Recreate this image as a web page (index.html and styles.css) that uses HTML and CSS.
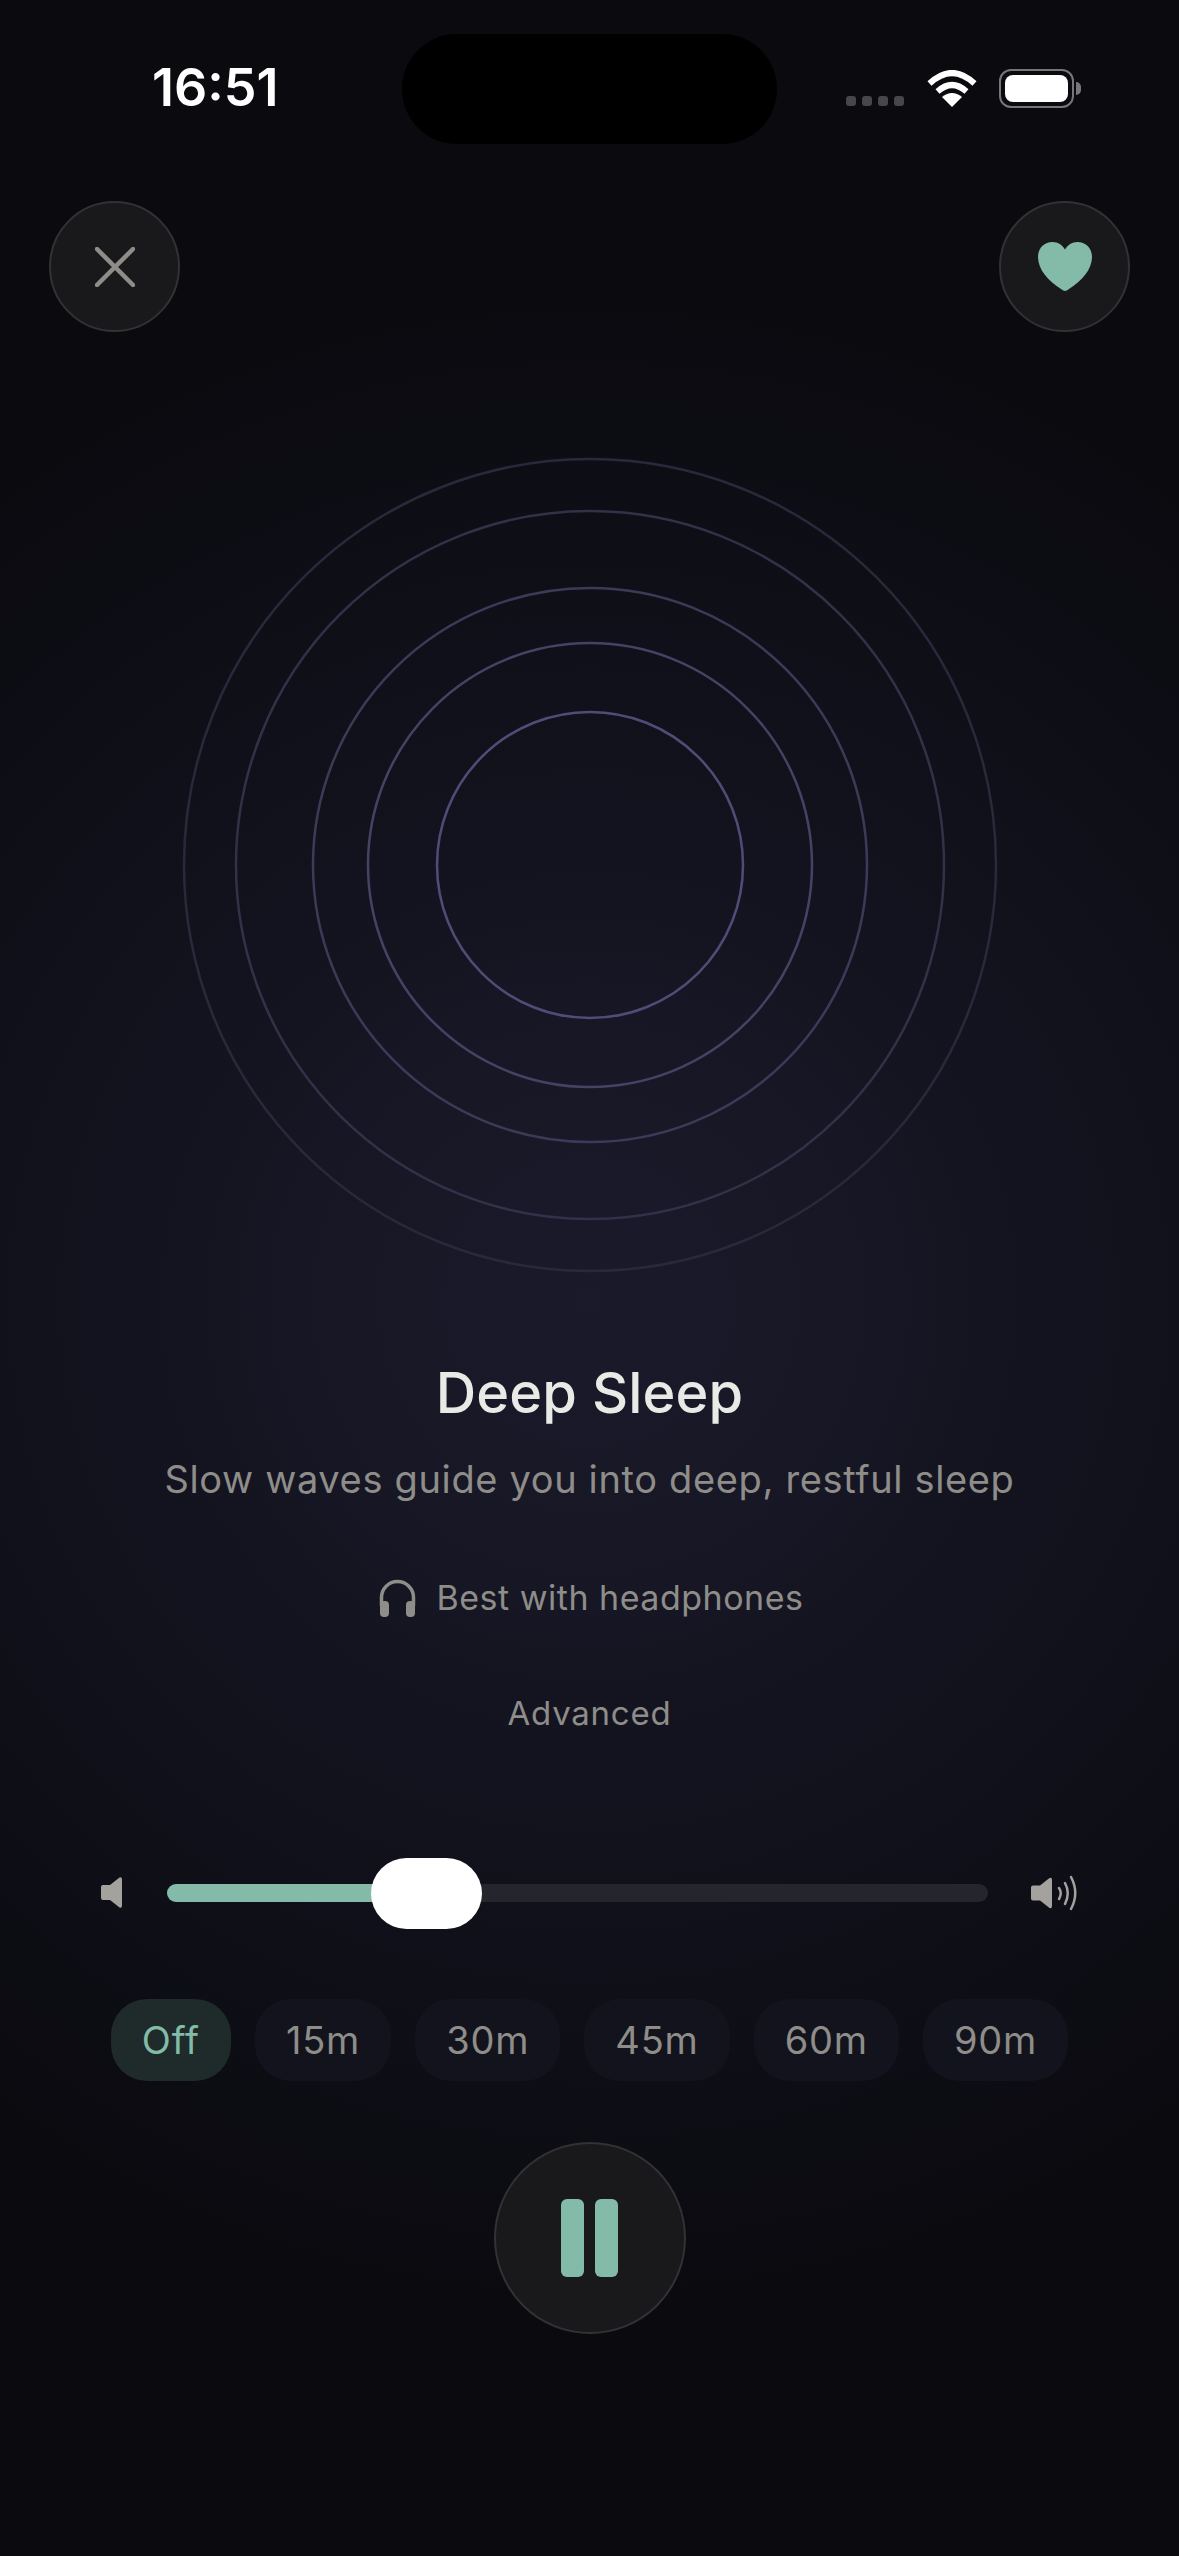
FILE: index.html
```html
<!doctype html>
<html lang="en">

<head>
  <title>Deep Sleep</title>
  <meta charset="utf-8">
  <meta name="viewport" content="width=device-width, initial-scale=1">
  <link rel="stylesheet" href="styles.css">
</head>

<body>
  <div class="screen">
    <div class="island"></div>

    <div class="status">
      <div class="time">16:51</div>
      <div class="status-icons">
        <div class="signal"><span></span><span></span><span></span><span></span></div>
        <svg class="wifi" width="50" height="37" viewBox="0 0 50 37">
          <path d="M2.5 13.5Q25 -7.5 47.5 13.5" fill="none" stroke="#fff" stroke-width="6" />
          <path d="M10.5 21.5Q25 8.5 39.5 21.5" fill="none" stroke="#fff" stroke-width="6" />
          <path d="M25 37L15 27Q25 19 35 27Z" fill="#fff" />
        </svg>
        <div class="battery"><div class="battery-fill"></div></div>
        <div class="battery-nub"></div>
      </div>
    </div>

    <div class="topbar">
      <div class="round-btn">
        <svg width="40" height="40" viewBox="0 0 40 40">
          <path d="M2 2L38 38M38 2L2 38" fill="none" stroke="#8e8d89" stroke-width="4.500" stroke-linecap="round" />
        </svg>
      </div>
      <div class="round-btn">
        <svg width="54" height="49" viewBox="0 0 54 49">
          <path d="M27 49C26 49 24.500 48 23 47C10 38.500 0 27.500 0 15C0 6 6.500 0 14.500 0C20 0 24.500 3 27 7.500C29.500 3 34 0 39.500 0C47.500 0 54 6 54 15C54 27.500 44 38.500 31 47C29.500 48 28 49 27 49Z" fill="#83bba8" />
        </svg>
      </div>
    </div>

    <svg class="rings" width="820" height="820" viewBox="0 0 820 820">
      <circle cx="410" cy="410" r="406" fill="none" stroke="#2a293c" stroke-width="2.500" />
      <circle cx="410" cy="410" r="354" fill="none" stroke="#333148" stroke-width="2.500" />
      <circle cx="410" cy="410" r="277" fill="none" stroke="#3c3a57" stroke-width="2.500" />
      <circle cx="410" cy="410" r="222" fill="none" stroke="#454264" stroke-width="2.500" />
      <circle cx="410" cy="410" r="153" fill="none" stroke="#504c77" stroke-width="2.500" />
    </svg>

    <div class="title">Deep Sleep</div>
    <div class="subtitle">Slow waves guide you into deep, restful sleep</div>

    <div class="hint">
      <svg width="37" height="38" viewBox="0 0 37 38">
        <path d="M2.500 27V18.500A16 16 0 0 1 34.500 18.500V27" fill="none" stroke="#8e8d89" stroke-width="3.500" />
        <rect x="1" y="22" width="9" height="16" rx="4" fill="#8e8d89" />
        <rect x="27" y="22" width="9" height="16" rx="4" fill="#8e8d89" />
      </svg>
      <span>Best with headphones</span>
    </div>

    <div class="advanced">Advanced</div>

    <div class="volume">
      <svg class="vol-low" width="21" height="31" viewBox="0 0 21 31">
        <path d="M18.500 .5Q21 -.5 21 2.500V28.500Q21 31.500 18.500 30.500L9 23H2Q0 23 0 21V10Q0 8 2 8H9Z" fill="#a3a29d" />
      </svg>
      <div class="track">
        <div class="track-fill"></div>
        <div class="thumb"></div>
      </div>
      <svg class="vol-high" width="48" height="36" viewBox="0 0 48 36">
        <path d="M18.500 3Q21 2 21 5V31Q21 34 18.500 33L9 25.500H2Q0 25.500 0 23.500V12.500Q0 10.500 2 10.500H9Z" fill="#a3a29d" />
        <path d="M28 13Q31.500 18 28 24M34 8Q39.500 18 34 29M40 2Q48.500 18 40 34" fill="none" stroke="#a3a29d" stroke-width="2.500" stroke-linecap="round" />
      </svg>
    </div>

    <div class="chips">
      <div class="chip active">Off</div>
      <div class="chip">15m</div>
      <div class="chip">30m</div>
      <div class="chip">45m</div>
      <div class="chip">60m</div>
      <div class="chip">90m</div>
    </div>

    <div class="pause-wrap">
      <div class="pause-btn">
        <span class="pause-bar"></span>
        <span class="pause-bar"></span>
      </div>
    </div>
  </div>
</body>

</html>
```

FILE: styles.css
```css
html {
  height: 100%;
}

body {
  margin: 0;
  padding: 0;
  background-color: #0a0a0f;
  font-family: 'Inter', 'Liberation Sans', sans-serif;
}

.screen {
  position: relative;
  width: 1179px;
  height: 2556px;
  overflow: hidden;
  background-color: #0a0a0f;
  background-image: radial-gradient(circle 1000px at 589px 1300px, #1b1a2b 0%, #161624 30%, #10101a 65%, #0a0a0f 100%);
}

/* Camera cutout sits over the status bar */
.island {
  position: absolute;
  left: 402px;
  top: 34px;
  width: 375px;
  height: 110px;
  border-radius: 55px;
  background-color: #000000;
}

.status {
  height: 176px;
  display: flex;
  align-items: center;
  justify-content: space-between;
  padding: 0 98px 0 152px;
  box-sizing: border-box;
}

.time {
  font-size: 52px;
  font-weight: 600;
  color: #ffffff;
  line-height: 60px;
}

.status-icons {
  display: flex;
  align-items: center;
}

.signal {
  display: flex;
  gap: 6px;
  margin: 26px 23px 0 0;
}

.signal span {
  width: 10px;
  height: 10px;
  border-radius: 3px;
  background-color: #47474b;
}

.wifi {
  margin-right: 22px;
}

.battery {
  width: 75px;
  height: 39px;
  padding: 4px;
  box-sizing: border-box;
  border: 2px solid #77777a;
  border-radius: 12px;
}

.battery-fill {
  width: 100%;
  height: 100%;
  border-radius: 8px;
  background-color: #ffffff;
}

.battery-nub {
  width: 5px;
  height: 13px;
  margin-left: 2px;
  border-radius: 0 6px 6px 0;
  background-color: #77777a;
}

.topbar {
  display: flex;
  justify-content: space-between;
  padding: 25px 49px 0 49px;
}

.round-btn {
  width: 131px;
  height: 131px;
  box-sizing: border-box;
  border: 2px solid #323235;
  border-radius: 50%;
  background-color: #19191b;
  display: flex;
  align-items: center;
  justify-content: center;
}

.rings {
  display: block;
  margin: 123px auto 0 auto;
}

.title {
  margin-top: 84px;
  font-size: 56px;
  font-weight: 500;
  line-height: 68px;
  letter-spacing: 0.1px;
  color: #e9e9e5;
  text-align: center;
}

.subtitle {
  margin-top: 27px;
  font-size: 38px;
  line-height: 50px;
  color: #8e8d89;
  text-align: center;
  letter-spacing: 0.65px;
}

.hint {
  margin-top: 69px;
  padding-left: 3px;
  display: flex;
  align-items: center;
  justify-content: center;
  gap: 21px;
  font-size: 34px;
  line-height: 50px;
  color: #8e8d89;
  letter-spacing: 0.5px;
}

.advanced {
  margin-top: 65px;
  font-size: 33px;
  line-height: 50px;
  color: #8e8d89;
  text-align: center;
  letter-spacing: 0.75px;
}

.volume {
  margin-top: 119px;
  height: 71px;
  display: flex;
  align-items: center;
  padding: 0 100px 0 101px;
}

.vol-low {
  margin-right: 45px;
}

.track {
  position: relative;
  flex: 1;
  height: 18px;
  border-radius: 9px;
  background-color: #25252d;
}

.track-fill {
  width: 260px;
  height: 100%;
  border-radius: 9px 0 0 9px;
  background-color: #83bba8;
}

/* Thumb overlaps the track */
.thumb {
  position: absolute;
  left: 204px;
  top: -26px;
  width: 111px;
  height: 71px;
  border-radius: 36px;
  background-color: #ffffff;
}

.vol-high {
  margin-left: 43px;
}

.chips {
  margin-top: 71px;
  display: flex;
  justify-content: center;
  gap: 24px;
}

.chip {
  height: 82px;
  padding: 0 31px;
  border-radius: 36px;
  background-color: #12131c;
  font-size: 38px;
  line-height: 82px;
  letter-spacing: 0.8px;
  color: #8e8d89;
}

.chip.active {
  background-color: #1f2a2a;
  color: #83bba8;
}

.pause-wrap {
  margin-top: 61px;
  display: flex;
  justify-content: center;
}

.pause-btn {
  width: 192px;
  height: 192px;
  box-sizing: border-box;
  border: 2px solid #323235;
  border-radius: 50%;
  background-color: #19191b;
  display: flex;
  align-items: center;
  justify-content: center;
  gap: 11px;
}

.pause-bar {
  width: 23px;
  height: 78px;
  border-radius: 6px;
  background-color: #83bba8;
}
```
